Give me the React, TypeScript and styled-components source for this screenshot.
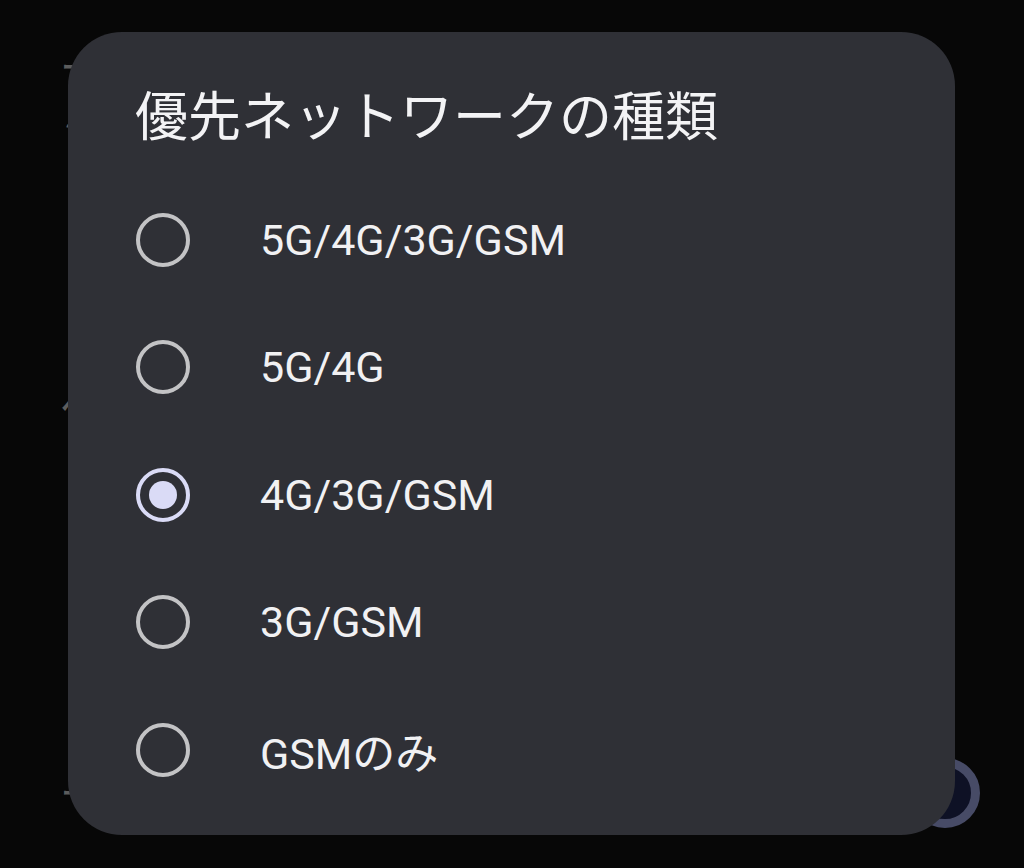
import React, { useState } from 'react'
import styled, { createGlobalStyle } from 'styled-components'

const GlobalStyle = createGlobalStyle`
  html, body {
    margin: 0;
    padding: 0;
    background: #070707;
  }
  body {
    font-family: Roboto, "Noto Sans CJK JP", sans-serif;
    -webkit-font-smoothing: antialiased;
  }
`

const options = ['5G/4G/3G/GSM', '5G/4G', '4G/3G/GSM', '3G/GSM', 'GSMのみ']

// settings list lying under the modal, only its left edge peeks out
const behindRows = ['ー', 'ミ', 'ペ', 'ー']

const App: React.FC = () => {
  const [selected, setSelected] = useState(2)

  return (
    <Screen>
      <GlobalStyle />
      <Behind aria-hidden>
        {behindRows.map((t, i) => (
          <BehindItem key={i}>{t}</BehindItem>
        ))}
      </Behind>
      <Thumb />

      <Dialog role="dialog" aria-labelledby="dlg-title">
        <Title id="dlg-title">優先ネットワークの種類</Title>
        <List>
          {options.map((label, i) => (
            <Row key={label} onClick={() => setSelected(i)}>
              <Radio $checked={i === selected} />
              <Label>{label}</Label>
            </Row>
          ))}
        </List>
      </Dialog>
    </Screen>
  )
}

const Screen = styled.div`
  position: relative;
  display: grid;
  width: 1024px;
  height: 868px;
  overflow: hidden;
  background: #070707;
  box-sizing: border-box;
`

const Behind = styled.div`
  grid-area: 1 / 1;
  display: flex;
  flex-direction: column;
  gap: 0;
  padding: 40px 0 0 60px;
  & > :nth-child(2) { margin-top: 0; }
  & > :nth-child(3) { margin-top: 236px; }
  & > :nth-child(4) { margin-top: 340px; }
`

const BehindItem = styled.div`
  font-family: "Noto Sans CJK JP", sans-serif;
  font-size: 40px;
  line-height: 50px;
  color: #5c5c5c;
`

const Thumb = styled.div`
  position: absolute;
  left: 910px;
  top: 758px;
  width: 70px;
  height: 70px;
  border-radius: 50%;
  box-sizing: border-box;
  border: 9px solid #474b66;
  background: #0e1125;
`

const Dialog = styled.div`
  grid-area: 1 / 1;
  position: relative;
  z-index: 1;
  align-self: start;
  justify-self: start;
  margin: 32px 0 0 68px;
  width: 887px;
  height: 803px;
  border-radius: 54px;
  background: #2f3036;
  padding: 50px 0 0 68px;
  box-sizing: border-box;
`

const Title = styled.h2`
  margin: 0;
  font-family: Roboto, "Noto Sans CJK JP", sans-serif;
  font-weight: 400;
  font-size: 53px;
  line-height: 72px;
  color: #f3f3f5;
  letter-spacing: 0;
  margin-left: -1px;
`

const List = styled.div`
  display: flex;
  flex-direction: column;
  margin-top: 22px;
`

const Row = styled.div`
  display: flex;
  align-items: center;
  height: 127.5px;
  gap: 71px;
  cursor: pointer;
`

const Radio = styled.span<{ $checked: boolean }>`
  position: relative;
  width: 54px;
  height: 54px;
  box-sizing: border-box;
  border-radius: 50%;
  border: 4px solid ${(p) => (p.$checked ? '#dadbf6' : '#c3c3c5')};
  flex-shrink: 0;

  &::after {
    content: '';
    display: ${(p) => (p.$checked ? 'block' : 'none')};
    position: absolute;
    left: 50%;
    top: 50%;
    width: 28px;
    height: 28px;
    border-radius: 50%;
    background: #dadbf6;
    transform: translate(-50%, -50%);
  }
`

const Label = styled.span`
  font-family: Roboto, "Noto Sans CJK JP", sans-serif;
  font-size: 43px;
  color: #f1f1f3;
  margin-left: -1px;
`

export default App
